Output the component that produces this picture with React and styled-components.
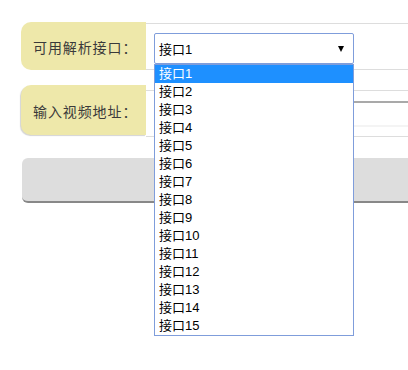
import styled, { createGlobalStyle } from "styled-components";

const GlobalStyle = createGlobalStyle`
  html, body {
    margin: 0;
    padding: 0;
    background: #ffffff;
  }
  body {
    font-family: "Liberation Sans", "Noto Sans CJK SC", sans-serif;
  }
`;

const Page = styled.div`
  width: 100%;
  min-height: 100vh;
  box-sizing: border-box;
  padding: 22px 0 0 21px;
  display: flex;
  flex-direction: column;
`;

const Row = styled.div`
  display: flex;
  align-items: flex-start;
  margin-bottom: ${(p) => p.$gap}px;
`;

const Label = styled.div`
  width: 125px;
  height: ${(p) => p.$height}px;
  box-sizing: border-box;
  flex-shrink: 0;
  display: flex;
  align-items: center;
  padding: 2px 0 0 12px;
  background: #eee8aa;
  border-radius: 10px 0 0 10px;
  box-shadow: ${(p) => (p.$shadow ? "-1px 1px 1px #d4d4d4" : "none")};
  font-family: "Noto Sans CJK SC", serif;
  font-size: 14px;
  letter-spacing: 0.9px;
  color: #3a3a3a;
`;

const Field = styled.div`
  flex: 1;
  min-width: 0;
  box-sizing: border-box;
  margin-top: ${(p) => p.$top}px;
  height: ${(p) => p.$height}px;
  border-top: 1px solid #dddddd;
  border-bottom: 1px solid #dddddd;
  padding: ${(p) => p.$padTop}px 0 0 8px;
  display: flex;
  align-items: flex-start;
`;

const SelectWrap = styled.div`
  position: relative;
  z-index: 5;
  width: 200px;
`;

const SelectBox = styled.div`
  box-sizing: border-box;
  width: 200px;
  height: 31px;
  border: 1px solid #7f9ddb;
  border-radius: 2px;
  background: #ffffff;
  display: flex;
  align-items: center;
  justify-content: space-between;
  padding: 0 9px 0 4px;
  font-size: 13px;
  color: #000000;
`;

const Arrow = styled.span`
  width: 0;
  height: 0;
  border-left: 3.5px solid transparent;
  border-right: 3.5px solid transparent;
  border-top: 6px solid #000000;
`;

const DropList = styled.ul`
  position: absolute;
  top: 100%;
  left: 0;
  z-index: 10;
  box-sizing: border-box;
  width: 200px;
  margin: 0;
  padding: 0;
  list-style: none;
  background: #ffffff;
  border: 1px solid #7f9ddb;
`;

const Option = styled.li`
  height: 18px;
  line-height: 18px;
  padding-left: 4px;
  font-size: 13px;
  color: ${(p) => (p.$active ? "#ffffff" : "#000000")};
  background: ${(p) => (p.$active ? "#1e90ff" : "transparent")};
`;

const UrlInput = styled.div`
  flex: 1;
  height: 26px;
  box-sizing: border-box;
  border-top: 2px solid #a9a9a9;
  border-left: 2px solid #a9a9a9;
  border-bottom: 2px solid #f4f4f4;
`;

const Button = styled.div`
  margin-left: 1px;
  height: 45px;
  box-sizing: border-box;
  background: #dddddd;
  border-radius: 6px 0 0 6px;
  border-bottom: 2px solid #888888;
`;

const options = Array.from({ length: 15 }, (_, i) => `接口${i + 1}`);

const App = () => {
  return (
    <>
      <GlobalStyle />
      <Page>
        <Row $gap={15}>
          <Label $height={48}>可用解析接口：</Label>
          <Field $top={1} $height={47} $padTop={9}>
            <SelectWrap>
              <SelectBox>
                <span>接口1</span>
                <Arrow />
              </SelectBox>
              <DropList>
                {options.map((o, i) => (
                  <Option key={o} $active={i === 0}>
                    {o}
                  </Option>
                ))}
              </DropList>
            </SelectWrap>
          </Field>
        </Row>
        <Row $gap={21}>
          <Label $height={50} $shadow>
            输入视频地址：
          </Label>
          <Field $top={5} $height={47} $padTop={10}>
            <UrlInput />
          </Field>
        </Row>
        <Button />
      </Page>
    </>
  );
};

export default App;
